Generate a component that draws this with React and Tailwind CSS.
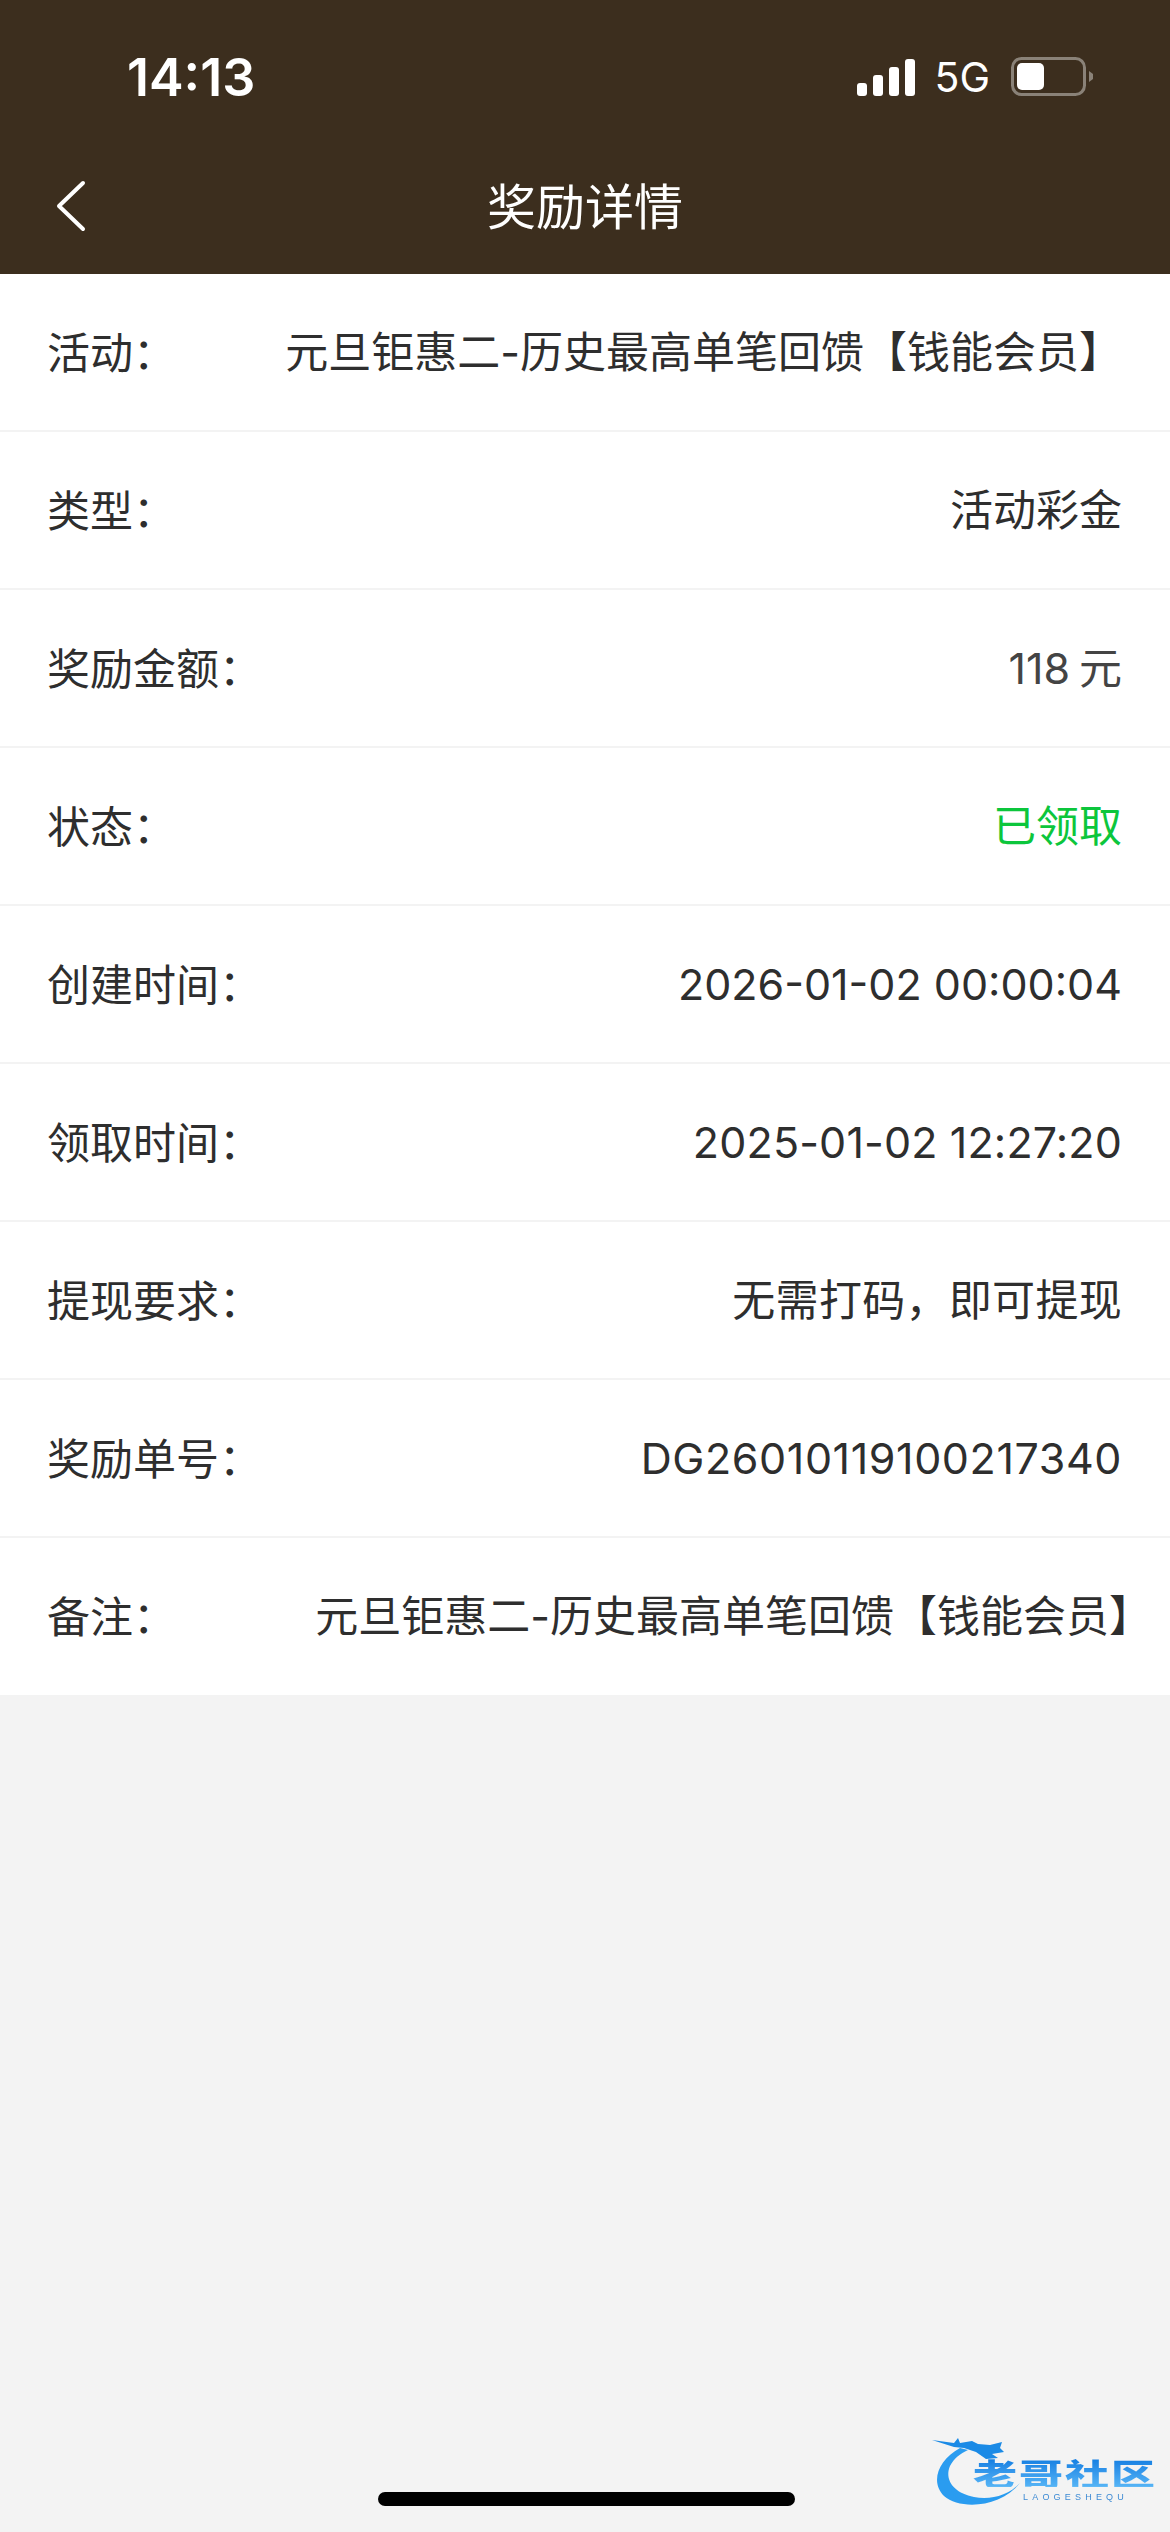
const rows = [
  { label: '活动：', value: '元旦钜惠二-历史最高单笔回馈【钱能会员】', valueClass: 'text-[#2e2e2e]' },
  { label: '类型：', value: '活动彩金', valueClass: 'text-[#2e2e2e]' },
  { label: '奖励金额：', value: <>118<span className="ml-[9px]">元</span></>, valueClass: 'text-[#444444]' },
  { label: '状态：', value: '已领取', valueClass: 'text-[#0cc63c]' },
  { label: '创建时间：', value: '2026-01-02 00:00:04', valueClass: 'text-[#2e2e2e]' },
  { label: '领取时间：', value: '2025-01-02 12:27:20', valueClass: 'text-[#2e2e2e] tracking-[0.15px]' },
  { label: '提现要求：', value: '无需打码，即可提现', valueClass: 'text-[#2e2e2e] tracking-[0.3px]' },
  { label: '奖励单号：', value: 'DG26010119100217340', valueClass: 'text-[#2e2e2e] tracking-[0.6px]' },
  { label: '备注：', value: '元旦钜惠二-历史最高单笔回馈【钱能会员】', valueClass: 'text-[#2e2e2e] mr-[-30px]' },
];

function SignalIcon() {
  return (
    <svg width="58" height="37" viewBox="0 0 58 37" fill="#fff">
      <rect x="0" y="24" width="10" height="13" rx="3" />
      <rect x="16" y="16" width="10" height="21" rx="3" />
      <rect x="32" y="8" width="10" height="29" rx="3" />
      <rect x="48" y="0" width="10" height="37" rx="3" />
    </svg>
  );
}

function BatteryIcon() {
  return (
    <svg width="82" height="40" viewBox="0 0 82 40">
      <rect x="1.5" y="1.5" width="72" height="36" rx="9" fill="none" stroke="#8a8278" strokeWidth="3" />
      <rect x="6" y="6" width="27" height="27" rx="5" fill="#fff" />
      <path d="M78 14 L82 17 V22 L78 25 Z" fill="#8a8278" />
    </svg>
  );
}

function Watermark() {
  return (
    <div className="absolute left-[930px] top-[2430px] h-[80px] w-[230px] blur-[0.7px]">
      <svg className="absolute left-0 top-0" width="100" height="80" viewBox="0 0 100 80">
        <path d="M30 18 C8 30 0 52 14 66 C30 80 70 78 90 53 C78 66 60 70 44 67 C24 63 14 50 20 36 C24 28 30 24 38 20 Z" fill="#2a9cf0" />
        <path d="M2 10 L24 13 L28 8 L30 13 L42 11 L48 14 L60 15 L72 12 L70 18 L74 22 L62 24 L68 28 L56 29 L46 22 L34 18 L24 17 Z" fill="#1a8ae6" />
      </svg>
      <div className="absolute left-[43px] top-[27px] origin-top-left scale-y-[0.68] bg-gradient-to-b from-[#0b7be0] to-[#55b4f6] bg-clip-text font-['Noto_Sans_CJK_SC',sans-serif] text-[44px] font-black leading-[44px] tracking-[2px] text-transparent">
        老哥社区
      </div>
      <div className="absolute left-[93px] top-[62px] font-['Liberation_Sans',sans-serif] text-[9px] leading-[10px] tracking-[4.2px] text-[#3d8ad4]">
        LAOGESHEQU
      </div>
    </div>
  );
}

export default function App() {
  return (
    <div className="relative h-[2532px] w-[1170px] overflow-hidden bg-[#f3f3f3] font-['Inter','Noto_Sans_CJK_SC',sans-serif]">
      <header className="h-[274px] bg-[#3c2e1e] text-white">
        {/* status bar */}
        <div className="flex h-[154px] items-center justify-between pl-[127px] pr-[77px]">
          <span className="pt-[2px] font-['Inter',sans-serif] text-[52px] font-semibold leading-none">14:13</span>
          <div className="flex items-center">
            <SignalIcon />
            <span className="ml-[19px] font-['Inter',sans-serif] text-[41px] leading-none">5G</span>
            <div className="ml-[21px]"><BatteryIcon /></div>
          </div>
        </div>
        {/* nav bar */}
        <div className="relative flex h-[98px] items-center justify-center">
          <button className="absolute left-[56px] top-[26px]">
            <svg width="30" height="52" viewBox="0 0 30 52" fill="none" stroke="#fff" strokeWidth="4" strokeLinecap="round" strokeLinejoin="round">
              <path d="M27 3 L3 26 L27 49" />
            </svg>
          </button>
          <h1 className="font-['Noto_Sans_CJK_SC',sans-serif] text-[49px] font-normal leading-none">奖励详情</h1>
        </div>
      </header>

      <main className="bg-white">
        {rows.map((row, i) => (
          <div
            key={row.label}
            className={`flex items-center justify-between pl-[47px] pr-[48px] text-[43px] leading-none ${i < rows.length - 1 ? 'h-[158px] border-b-2 border-[#f3f3f3]' : 'h-[157px]'}`}
          >
            <span className="pb-[4px] font-['Noto_Sans_CJK_SC',sans-serif] text-[#2e2e2e]">{row.label}</span>
            <span className={row.valueClass}>{row.value}</span>
          </div>
        ))}
      </main>

      <Watermark />
      {/* home indicator */}
      <div className="absolute left-[378px] top-[2492px] h-[14px] w-[417px] rounded-full bg-black" />
    </div>
  );
}
